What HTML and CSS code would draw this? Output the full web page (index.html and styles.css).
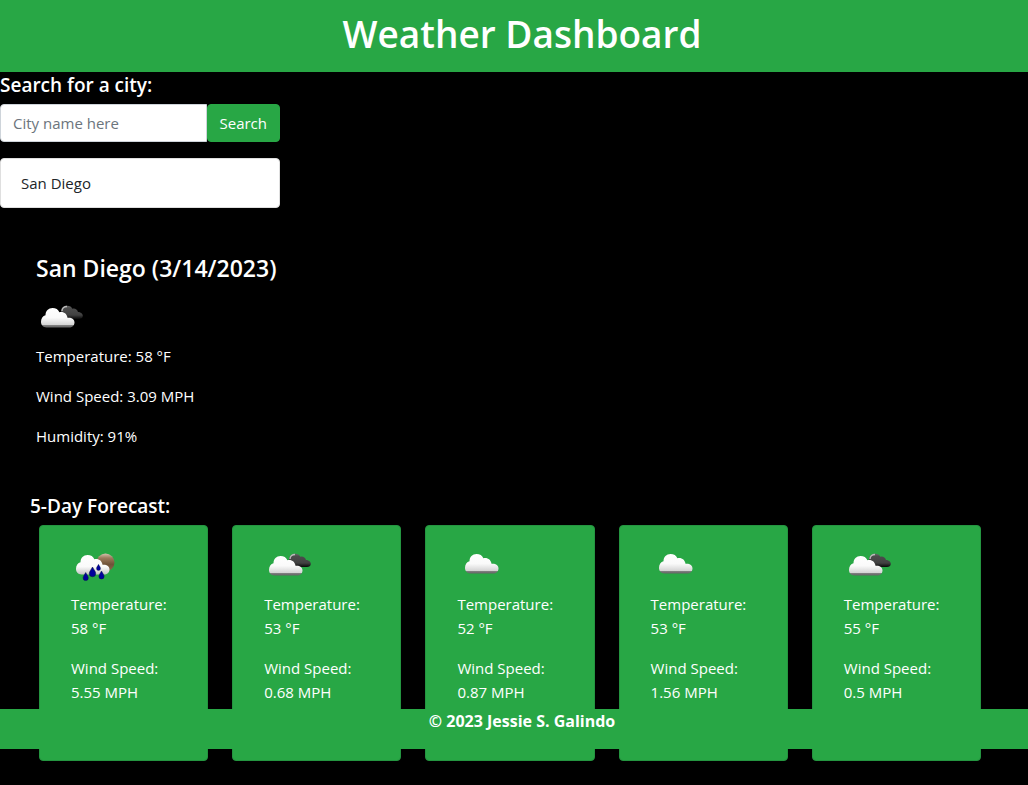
FILE: index.html
```html
<!DOCTYPE html>
<html lang="en">
<head>
<meta charset="utf-8">
<meta name="viewport" content="width=device-width, initial-scale=1">
<title>Weather Dashboard</title>
<link rel="stylesheet" href="styles.css">
</head>
<body>
<svg class="sprite" aria-hidden="true">
  <defs>
    <linearGradient id="light" x1="0" y1="0" x2="0" y2="1">
      <stop offset="0" stop-color="#fff"/>
      <stop offset=".5" stop-color="#fafafa"/>
      <stop offset=".86" stop-color="#d4d4d4"/>
      <stop offset=".9" stop-color="#777"/>
      <stop offset="1" stop-color="#666"/>
    </linearGradient>
    <linearGradient id="dark" x1="0" y1="0" x2="0" y2="1">
      <stop offset="0" stop-color="#666"/>
      <stop offset=".2" stop-color="#4c4c4c"/>
      <stop offset=".7" stop-color="#414141"/>
      <stop offset="1" stop-color="#080808"/>
    </linearGradient>
    <linearGradient id="soft" x1="0" y1="0" x2="0" y2="1">
      <stop offset="0" stop-color="#fff"/>
      <stop offset=".6" stop-color="#fafafa"/>
      <stop offset="1" stop-color="#c4c4c4"/>
    </linearGradient>
    <linearGradient id="sun" x1="0" y1="0" x2="0" y2="1">
      <stop offset="0" stop-color="#d5c2ae"/>
      <stop offset=".25" stop-color="#9c7b5d"/>
      <stop offset=".6" stop-color="#6f5238"/>
      <stop offset="1" stop-color="#8b6b4e"/>
    </linearGradient>
    <path id="cloud" d="M5.500 19.500C2 19.500 0 17 0 13.800C0 10.500 1.800 8 4.500 7.300C4.500 3 7.500 0 11.500 0C14.800 0 17.300 1.500 18.400 4.300C22.500 3.300 26 5.800 26.500 9.800C30.500 9.300 33.500 11.300 33.500 14.500C33.500 17.500 31 19.500 28 19.500Z"/>
    <path id="drop" d="M0 0C1.300 2.700 2.900 4 2.900 6A2.900 2.900 0 0 1-2.900 6C-2.900 4-1.300 2.700 0 0Z"/>
  </defs>
  <symbol id="broken-clouds" viewBox="0 0 50 50">
    <path d="M25 18C25 14 27.500 11.800 31 11.800C33.800 11.800 35.600 13 36.300 14.700C39 14 41.300 15.500 42 18C44.500 18 46.800 19.700 46.800 21.800C46.800 24 45 25 43 25H32Z" fill="url(#dark)"/>
    <path d="M26 17C26 14 28.500 12.500 31 12.500" fill="none" stroke="#bbb" stroke-width="1.400"/>
    <use href="#cloud" x="5" y="14" fill="url(#light)"/>
  </symbol>
  <symbol id="clouds" viewBox="0 0 50 50">
    <use href="#cloud" x="8" y="12" fill="url(#light)"/>
  </symbol>
  <symbol id="rain" viewBox="0 0 50 50">
    <circle cx="34.500" cy="20.500" r="9" fill="url(#sun)"/>
    <use href="#cloud" x="5" y="13" fill="url(#soft)"/>
    <g fill="#00009c" stroke="#0a1640" stroke-width=".5">
      <use href="#drop" transform="translate(14.700 30.500) scale(.9)"/>
      <use href="#drop" transform="translate(21.500 25) scale(1.100)"/>
      <use href="#drop" transform="translate(27.500 22.300) scale(.7)"/>
      <use href="#drop" transform="translate(30.500 29) scale(.9)"/>
    </g>
  </symbol>
</svg>

<header class="banner">
  <h1 class="banner-title">Weather Dashboard</h1>
</header>

<main>
  <section class="search">
    <form>
      <label class="subheading" for="city">Search for a city:</label>
      <div class="search-group">
        <input class="search-input" id="city" type="text" placeholder="City name here">
        <button class="search-button" type="button">Search</button>
      </div>
    </form>
    <ul class="history">
      <li class="history-item">San Diego</li>
    </ul>
  </section>

  <section class="current">
    <h2 class="current-title">San Diego (3/14/2023)</h2>
    <svg class="icon" role="img" aria-label="Broken clouds"><use href="#broken-clouds"/></svg>
    <p>Temperature: 58 °F</p>
    <p>Wind Speed: 3.09 MPH</p>
    <p>Humidity: 91%</p>
  </section>

  <section class="forecast">
    <h3 class="subheading">5-Day Forecast:</h3>
    <div class="cards">
      <article class="card">
        <svg class="icon" role="img" aria-label="Rain"><use href="#rain"/></svg>
        <p>Temperature: <span>58 °F</span></p>
        <p>Wind Speed: <span>5.55 MPH</span></p>
      </article>
      <article class="card">
        <svg class="icon" role="img" aria-label="Broken clouds"><use href="#broken-clouds"/></svg>
        <p>Temperature: <span>53 °F</span></p>
        <p>Wind Speed: <span>0.68 MPH</span></p>
      </article>
      <article class="card">
        <svg class="icon" role="img" aria-label="Scattered clouds"><use href="#clouds"/></svg>
        <p>Temperature: <span>52 °F</span></p>
        <p>Wind Speed: <span>0.87 MPH</span></p>
      </article>
      <article class="card">
        <svg class="icon" role="img" aria-label="Scattered clouds"><use href="#clouds"/></svg>
        <p>Temperature: <span>53 °F</span></p>
        <p>Wind Speed: <span>1.56 MPH</span></p>
      </article>
      <article class="card">
        <svg class="icon" role="img" aria-label="Broken clouds"><use href="#broken-clouds"/></svg>
        <p>Temperature: <span>55 °F</span></p>
        <p>Wind Speed: <span>0.5 MPH</span></p>
      </article>
    </div>
  </section>
</main>

<footer class="footer">© 2023 Jessie S. Galindo</footer>
</body>
</html>
```

FILE: styles.css
```css
*,
*::before,
*::after {
  box-sizing: border-box;
}

body {
  margin: 0;
  background: #000;
  color: #fff;
  font-family: "Segoe UI", "Open Sans", "Noto Sans", sans-serif;
  font-size: 15px;
  line-height: 24px;
}

h1,
h2,
h3,
p,
ul {
  margin: 0;
  padding: 0;
}

p {
  margin-bottom: 16px;
}

.sprite {
  position: absolute;
  width: 0;
  height: 0;
}

.banner {
  padding: 10px 0 14px 16px;
  background: #28a745;
  text-align: center;
}

.banner-title {
  font-size: 37px;
  font-weight: 600;
  line-height: 48px;
}

.subheading {
  display: block;
  font-size: 19px;
  font-weight: 600;
  line-height: 24px;
}

.search {
  width: 280px;
  max-width: 100%;
}

.search .subheading {
  padding: 1px 0 7px;
}

.search-group {
  display: flex;
}

.search-input,
.search-button {
  height: 38px;
  padding: 6px 12px;
  border: 1px solid #ced4da;
  border-radius: 4px;
  font: inherit;
}

.search-input {
  flex: 1;
  min-width: 0;
  border-radius: 4px 0 0 4px;
  background: #fff;
  color: #495057;
}

.search-input::placeholder {
  color: #6c757d;
  opacity: 1;
}

.search-button {
  border-color: #28a745;
  background: #28a745;
  color: #fff;
}

.history {
  margin-top: 16px;
  list-style: none;
}

.history-item {
  padding: 12px 20px;
  border: 1px solid #dfdfdf;
  border-radius: 4px;
  background: #fff;
  color: #212529;
}

.current {
  padding: 44px 36px 0;
}

.current-title {
  margin-bottom: 8px;
  font-size: 23px;
  font-weight: 600;
  line-height: 32px;
}

.icon {
  display: block;
  width: 50px;
  height: 50px;
}

.current .icon {
  margin-top: 10px;
}

.forecast {
  padding: 30px 47px 24px 30px;
}

.cards {
  display: grid;
  grid-template-columns: repeat(5, 1fr);
  gap: 24px;
  padding: 7px 0 0 9px;
}

.card {
  padding: 16px 31px 40px;
  border: 1px solid #249540;
  border-radius: 4px;
  background: #28a745;
}

.card span {
  display: block;
}

.footer {
  position: fixed;
  right: 0;
  bottom: 36px;
  left: 0;
  padding: 0 0 16px 16px;
  background: #28a745;
  font-size: 16px;
  font-weight: 700;
  text-align: center;
}
```
